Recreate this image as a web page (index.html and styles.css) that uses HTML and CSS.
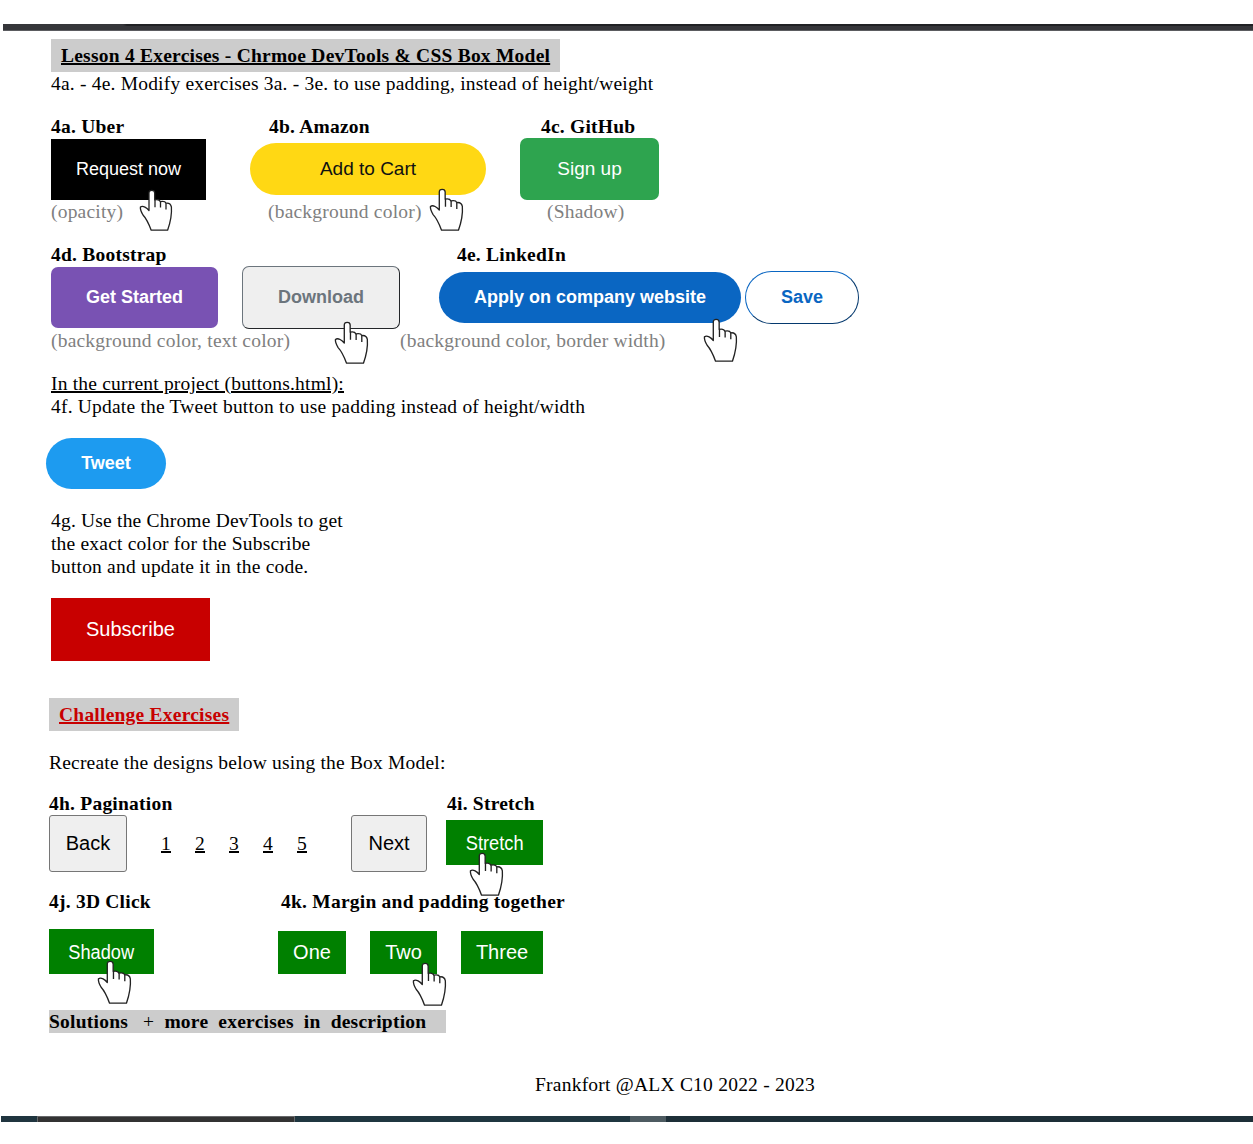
FILE: index.html
```html
<!DOCTYPE html>
<html lang="en">
<head>
<meta charset="utf-8">
<title>Lesson 4 Exercises</title>
<link rel="stylesheet" href="styles.css">
</head>
<body>
<svg class="defs" width="0" height="0" aria-hidden="true">
  <symbol id="hand" viewBox="0 0 34 42" preserveAspectRatio="none">
    <path d="M10 21.500V4Q10 1.300 12.800 1.300Q15.700 1.300 15.700 4V10.800Q20.300 10 21.300 12.600Q26 11.600 27 14.200Q31.500 13.600 32.400 18C33 26 31.500 33 28.600 41.200H12.200C9.500 34 7.300 29.500 4 26Q1 21 1.400 18C4 16 8 19 10 21.500Z" fill="#fff" stroke="#222" stroke-width="1.300" stroke-linejoin="round"/>
    <path d="M16 10.800V18.200M21.500 12.600V18.600M27 14.200V20.400" fill="none" stroke="#222" stroke-width="1.300"/>
  </symbol>
</svg>

<div class="top-bar"></div>

<main class="lesson">
  <h1 class="title">Lesson 4 Exercises - Chrmoe DevTools &amp; CSS Box Model</h1>
  <p class="text">4a. - 4e. Modify exercises 3a. - 3e. to use padding, instead of height/weight</p>

  <section class="group first">
    <div class="heads cols-abc"><h2>4a. Uber</h2><h2>4b. Amazon</h2><h2>4c. GitHub</h2></div>
    <div class="buttons">
      <button class="uber">Request now<svg class="hand hand-uber"><use href="#hand"/></svg></button>
      <button class="amazon">Add to Cart<svg class="hand hand-amazon"><use href="#hand"/></svg></button>
      <button class="github">Sign up</button>
    </div>
    <div class="notes notes-abc"><span>(opacity)</span><span>(background color)</span><span>(Shadow)</span></div>
  </section>

  <section class="group second">
    <div class="heads cols-de"><h2>4d. Bootstrap</h2><h2>4e. LinkedIn</h2></div>
    <div class="buttons">
      <button class="started">Get Started</button>
      <button class="download">Download<svg class="hand hand-download"><use href="#hand"/></svg></button>
      <button class="apply">Apply on company website<svg class="hand hand-apply"><use href="#hand"/></svg></button>
      <button class="save">Save</button>
    </div>
    <div class="notes notes-de"><span>(background color, text color)</span><span>(background color, border width)</span></div>
  </section>

  <p class="project"><u>In the current project (buttons.html):</u><br>4f. Update the Tweet button to use padding instead of height/width</p>
  <button class="tweet">Tweet</button>
  <p class="devtools">4g. Use the Chrome DevTools to get<br>the exact color for the Subscribe<br>button and update it in the code.</p>
  <button class="subscribe">Subscribe</button>
</main>

<section class="challenge">
  <h1 class="title red">Challenge Exercises</h1>
  <p class="recreate">Recreate the designs below using the Box Model:</p>
  <div class="heads cols-hi"><h2>4h. Pagination</h2><h2>4i. Stretch</h2></div>
  <div class="pager">
    <button class="page-button back">Back</button>
    <nav class="numbers"><u>1</u><u>2</u><u>3</u><u>4</u><u>5</u></nav>
    <button class="page-button next">Next</button>
    <button class="green stretch"><span class="narrow">Stretch</span><svg class="hand hand-stretch"><use href="#hand"/></svg></button>
  </div>
  <div class="heads cols-jk"><h2>4j. 3D Click</h2><h2>4k. Margin and padding together</h2></div>
  <div class="greens">
    <button class="green shadow"><span class="narrow">Shadow</span><svg class="hand hand-shadow"><use href="#hand"/></svg></button>
    <button class="green one">One</button>
    <button class="green two">Two<svg class="hand hand-two"><use href="#hand"/></svg></button>
    <button class="green three">Three</button>
  </div>
  <p class="solutions"><b>Solutions</b> <span class="plus">+</span> <b>more exercises in description</b></p>
</section>

<footer class="credit">Frankfort @ALX C10 2022 - 2023</footer>
<div class="task-bar"><i class="task-start"></i><i class="task-window"></i><i class="task-mid"></i><i class="task-active"></i><i class="task-rest"></i></div>
</body>
</html>
```
FILE: styles.css
```css
* { box-sizing: border-box; }
body {
  margin: 0;
  height: 1144px;
  overflow: hidden;
  background: #fff;
  color: #000;
  font: 19.5px/23px "Liberation Serif", "Times New Roman", serif;
  letter-spacing: 0.2px;
}
h1, h2, p { margin: 0; font-size: 19.5px; }
h1, h2, b { letter-spacing: 0.23px; }
h2 { white-space: nowrap; }
.defs { display: block; }

.top-bar {
  height: 7px;
  margin: 24px 0 8px 3px;
  background: linear-gradient(90deg, #35363a 120px, #202124 124px) 0 0 / 100% 2px no-repeat, #35363a;
  border-bottom: 1px solid #5b5c60;
}
.lesson { padding-left: 51px; }
.title {
  width: 509px;
  padding: 5px 0 5px 10px;
  background: #ccc;
  text-decoration: underline 2px;
  white-space: nowrap;
}

button {
  position: relative;
  flex: none;
  padding: 0;
  border: 0;
  color: #fff;
  font-family: "Liberation Sans", Arial, sans-serif;
  letter-spacing: 0;
  white-space: nowrap;
}
.hand {
  position: absolute;
  z-index: 1;
  width: 35px;
  height: 43px;
}
.heads, .notes { display: grid; height: 23px; }
.notes { color: gray; }
.notes span { white-space: nowrap; }
.buttons { display: flex; align-items: center; }

.first { margin-top: 20px; }
.first .buttons { height: 62px; }
.cols-abc { grid-template-columns: 218px 272px auto; }
.notes-abc { grid-template-columns: 217px 279px auto; }
.uber { width: 155px; height: 61px; margin-top: 1px; background: #000; font-size: 18px; }
.hand-uber { left: 88px; top: 50px; width: 34px; height: 42px; }
.amazon { width: 236px; height: 52px; margin-left: 44px; border-radius: 26px; background: #ffd814; color: #0f1111; font-size: 19px; }
.hand-amazon { left: 179px; top: 45px; }
.github { width: 139px; height: 62px; margin-left: 34px; border-radius: 7px; background: #2ea44f; font-size: 19px; }

.second { margin-top: 20px; }
.second .buttons { height: 63px; }
.second button { font-size: 18px; font-weight: bold; }
.cols-de { grid-template-columns: 406px auto; }
.notes-de { grid-template-columns: 349px auto; }
.started { width: 167px; height: 61px; border-radius: 7px; background: #7952b3; }
.download { width: 158px; height: 63px; margin-left: 24px; border: 1px outset #6c757d; border-radius: 7px; background: #efefef; color: #6c757d; }
.hand-download { left: 91px; top: 54px; }
.apply { width: 302px; height: 51px; margin-left: 39px; border-radius: 26px; background: #0a66c2; }
.hand-apply { left: 264px; top: 46px; height: 44px; }
.save { width: 114px; height: 53px; margin-left: 4px; border: 1px outset #0a66c2; border-radius: 27px; background: #fff; color: #0a66c2; }

.project { margin-top: 20px; }
.tweet {
  display: block;
  width: 120px;
  height: 51px;
  margin: 20px 0 20px -5px;
  border-radius: 26px;
  background: #1d9bf0;
  font-size: 18px;
  font-weight: bold;
}
.subscribe { display: block; width: 159px; height: 63px; margin-top: 20px; background: #c80000; font-size: 20px; }

.challenge { margin-top: 37px; padding-left: 49px; }
.red { width: 190px; color: #c80000; }
.recreate { margin: 20px 0 18px; }
.cols-hi { grid-template-columns: 398px auto; }
.pager { display: flex; height: 57px; }
.page-button { height: 57px; border: 1px solid #767676; border-radius: 3px; background: #efefef; color: #000; font-size: 20px; }
.back { width: 78px; }
.next { width: 76px; }
.numbers { display: flex; gap: 24px; width: 224px; padding: 17px 0 0 34px; letter-spacing: 0.25px; }
u { text-decoration-thickness: 1.5px; }
.green { background: #008000; font-size: 20px; }
.narrow { display: inline-block; padding-top: 1px; transform: scaleX(0.91); }
.stretch { width: 97px; height: 45px; margin: 5px 0 0 19px; }
.hand-stretch { left: 23px; top: 32px; height: 44px; }
.cols-jk { grid-template-columns: 232px auto; margin-top: 18px; }
.greens { display: flex; align-items: flex-end; height: 45px; margin-top: 16px; }
.shadow { width: 105px; height: 45px; }
.hand-shadow { left: 48px; top: 31px; height: 44px; }
.one { width: 68px; height: 43px; margin-left: 124px; }
.two { width: 67px; height: 43px; margin-left: 24px; }
.hand-two { left: 42px; top: 31px; height: 44px; }
.three { width: 82px; height: 43px; margin-left: 24px; }
.solutions { width: 397px; height: 23px; margin-top: 36px; background: #ccc; white-space: nowrap; word-spacing: 5px; }
.plus { margin-left: 5px; }

.credit { margin: 40px 0 20px 535px; letter-spacing: 0.23px; }
.task-bar { display: flex; height: 6px; margin-left: 1px; }
.task-start { width: 36px; background: #20353f; }
.task-window { width: 258px; border: 1px solid #66686a; border-bottom: 0; background: #333; }
.task-mid { width: 335px; background: #1f3640; }
.task-active { width: 36px; background: #4d5b61; }
.task-rest { flex: 1; background: #1d2f38; }
```
